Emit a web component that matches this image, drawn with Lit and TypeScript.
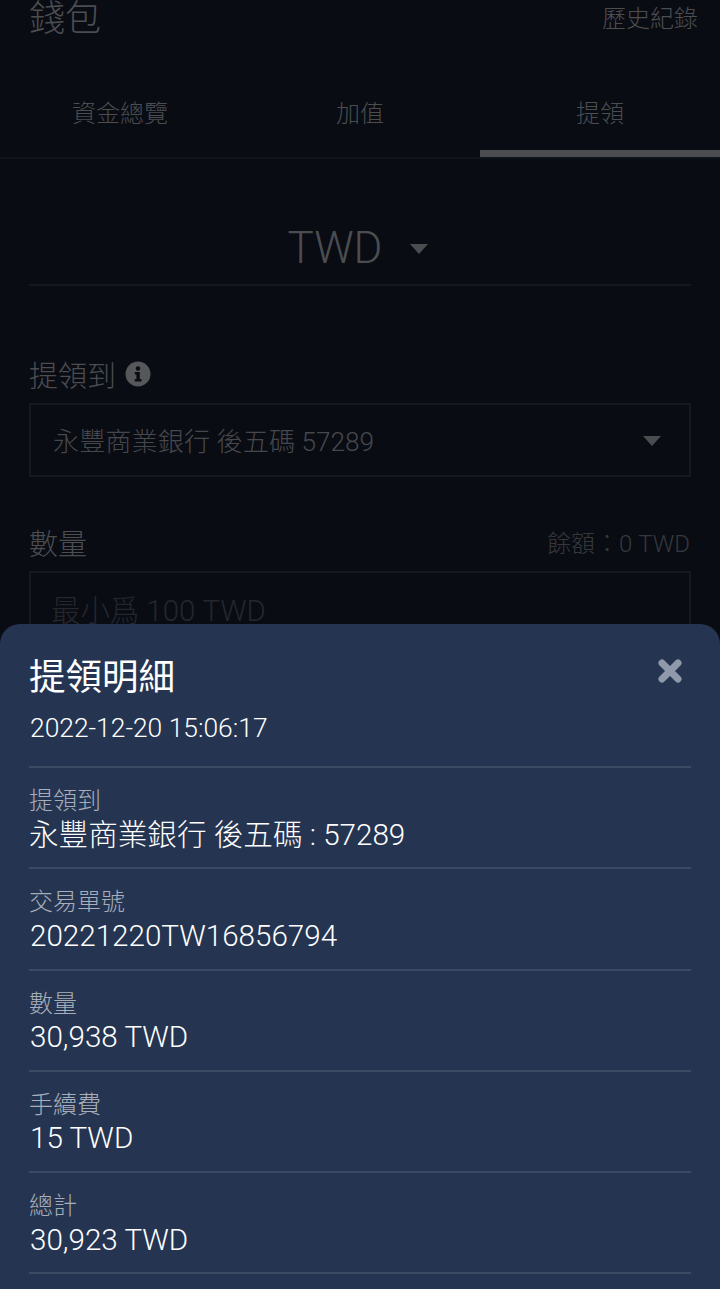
import { LitElement, html, css } from "lit";
import { customElement } from "lit/decorators.js";

const rows = [
  { label: "提領到", value: "永豐商業銀行 後五碼 : 57289", num: false },
  { label: "交易單號", value: "20221220TW16856794", num: true },
  { label: "數量", value: "30,938 TWD", num: true },
  { label: "手續費", value: "15 TWD", num: true },
  { label: "總計", value: "30,923 TWD", num: true },
];

@customElement("app-root")
export class AppRoot extends LitElement {
  static styles = css`
    :host {
      display: block;
      position: relative;
      width: 720px;
      height: 1289px;
      overflow: hidden;
      background: #090c13;
      color: #4b4d51;
      font-family: Roboto, "Noto Sans CJK TC", sans-serif;
      font-weight: 300;
    }
    .header {
      display: flex;
      justify-content: space-between;
      align-items: center;
      height: 38px;
      padding: 1px 22px 0 29px;
      box-sizing: border-box;
    }
    .title { font-size: 36px; line-height: 37px; }
    .history { font-size: 24px; line-height: 37px; }
    .tabs {
      display: flex;
      margin-top: 37px;
      height: 82px;
      border-bottom: 2px solid #0f131b;
    }
    .tab {
      flex: 1;
      display: flex;
      align-items: center;
      justify-content: center;
      padding-bottom: 10px;
      font-size: 24px;
      box-sizing: border-box;
    }
    .tab.active { border-bottom: 7px solid #4b4d50; padding-bottom: 3px; }
    .currency {
      display: flex;
      justify-content: center;
      align-items: center;
      gap: 28px;
      height: 127px;
      margin: 0 29px;
      padding: 53px 4px 0 0;
      border-bottom: 2px solid #141821;
      box-sizing: border-box;
      font-size: 44px;
    }
    .arrow {
      width: 0;
      height: 0;
      margin-top: 2px;
      border-left: 9px solid transparent;
      border-right: 9px solid transparent;
      border-top: 10px solid #4b4d50;
    }
    .form { padding: 0 29px; }
    .label-row {
      display: flex;
      align-items: center;
      justify-content: space-between;
      height: 40px;
      font-size: 29px;
    }
    .label-row.first { margin-top: 68px; }
    .label-row.second { margin-top: 45px; margin-bottom: 2px; }
    .label { display: flex; align-items: center; gap: 9px; }
    .info { display: block; }
    .balance { font-size: 24px; color: #36383d; margin-right: 1px; margin-bottom: 2px; }
    .field {
      display: flex;
      align-items: center;
      justify-content: space-between;
      height: 74px;
      margin-top: 9px;
      padding: 0 28px 0 22px;
      border: 2px solid #141821;
      box-sizing: border-box;
      font-size: 26.2px;
      color: #46484c;
    }
    .field.placeholder { color: #24272d; font-size: 29.4px; margin-top: 9px; padding: 0 0 0 20px; }
    .overlay {
      position: absolute;
      left: 0;
      right: 0;
      top: 624px;
      bottom: 0;
      background: #253551;
      border-radius: 20px 20px 0 0;
      padding: 0 29px;
      color: #fff;
    }
    .sheet-head { height: 144px; border-bottom: 2px solid #3c4a64; box-sizing: border-box; position: relative; }
    .sheet-title { font-size: 36.5px; line-height: 44px; padding-top: 32px; font-weight: 400; }
    .sheet-date { font-size: 26.4px; line-height: 30px; margin-top: 13px; padding-left: 1px; }
    .close { position: absolute; right: 9px; top: 35px; display: block; }
    .row {
      height: 101.25px;
      border-bottom: 2px solid #3c4a64;
      box-sizing: border-box;
      padding-top: 19px;
    }
    .row-label { font-size: 24px; line-height: 28px; color: #a7aeb9; }
    .row-value { font-size: 29.6px; line-height: 36px; margin-top: 1.6px; }
    .row-value.num { padding-left: 1px; }
  `;

  render() {
    return html`
      <div class="header">
        <div class="title">錢包</div>
        <div class="history">歷史紀錄</div>
      </div>
      <div class="tabs">
        <div class="tab">資金總覽</div>
        <div class="tab">加值</div>
        <div class="tab active">提領</div>
      </div>
      <div class="currency"><span>TWD</span><span class="arrow"></span></div>
      <div class="form">
        <div class="label-row first">
          <div class="label">
            提領到
            <svg class="info" width="26" height="26" viewBox="0 0 26 26">
              <circle cx="13" cy="13" r="12.5" fill="#55575a" />
              <circle cx="13" cy="7.5" r="2.2" fill="#090c13" />
              <path d="M9.8 11h5v7h1.6v2.4H9.8V18h1.6v-4.6H9.8z" fill="#090c13" />
            </svg>
          </div>
        </div>
        <div class="field">
          <span>永豐商業銀行 後五碼 57289</span><span class="arrow"></span>
        </div>
        <div class="label-row second">
          <div>數量</div>
          <div class="balance">餘額：0 TWD</div>
        </div>
        <div class="field placeholder"><span>最小爲 100 TWD</span></div>
      </div>
      <div class="overlay">
        <div class="sheet-head">
          <div class="sheet-title">提領明細</div>
          <div class="sheet-date">2022-12-20 15:06:17</div>
          <svg class="close" width="24" height="24" viewBox="0 0 24 24">
            <path d="M4 4L20 20M20 4L4 20" stroke="#8f99a9" stroke-width="7" stroke-linecap="round" />
          </svg>
        </div>
        ${rows.map(
          (r) => html`
            <div class="row">
              <div class="row-label">${r.label}</div>
              <div class="row-value ${r.num ? "num" : ""}">${r.value}</div>
            </div>
          `
        )}
      </div>
    `;
  }
}
